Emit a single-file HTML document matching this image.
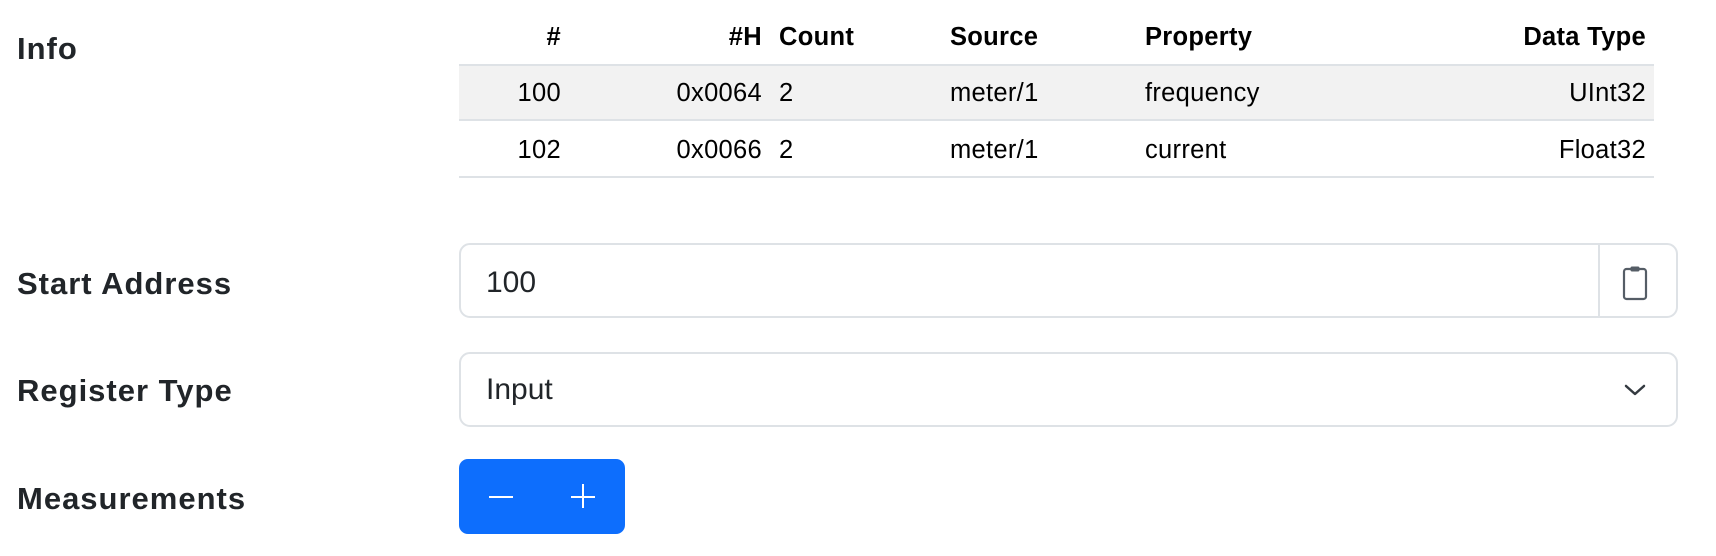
<!DOCTYPE html>
<html><head><meta charset="utf-8"><style>
*{box-sizing:border-box;margin:0;padding:0}
body{width:1716px;height:556px;background:#fff;font-family:"Liberation Sans",Arial,sans-serif;color:#212529;position:relative;overflow:hidden}
.lbl{position:absolute;left:17px;font-weight:bold;font-size:31px;letter-spacing:1px;color:#212529;line-height:1}
.t{position:absolute;font-size:25.5px;line-height:1;color:#000;letter-spacing:0.3px}
.h{font-weight:bold}
.r{text-align:right}
.row{position:absolute;left:459px;width:1195px}
.box{position:absolute;left:459px;width:1219px;height:75px;border:2px solid #dee2e6;border-radius:11px}
</style></head><body>
<div class="lbl" style="top:33px">Info</div>
<div class="lbl" style="top:268px">Start Address</div>
<div class="lbl" style="top:375px">Register Type</div>
<div class="lbl" style="top:483px">Measurements</div>

<div class="row" style="top:64px;height:57px;background:#f2f2f2;border-top:2px solid #dee2e6;border-bottom:2px solid #dee2e6"></div>
<div class="row" style="top:176px;height:2px;background:#dee2e6"></div>

<!-- header -->
<div class="t h r" style="top:25px;left:461px;width:100px">#</div>
<div class="t h r" style="top:25px;left:662px;width:100px">#H</div>
<div class="t h" style="top:25px;left:779px">Count</div>
<div class="t h" style="top:25px;left:950px">Source</div>
<div class="t h" style="top:25px;left:1145px">Property</div>
<div class="t h r" style="top:25px;left:1446px;width:200px">Data Type</div>
<!-- row1 -->
<div class="t r" style="top:81px;left:461px;width:100px">100</div>
<div class="t r" style="top:81px;left:662px;width:100px">0x0064</div>
<div class="t" style="top:81px;left:779px">2</div>
<div class="t" style="top:81px;left:950px">meter/1</div>
<div class="t" style="top:81px;left:1145px">frequency</div>
<div class="t r" style="top:81px;left:1446px;width:200px">UInt32</div>
<!-- row2 -->
<div class="t r" style="top:138px;left:461px;width:100px">102</div>
<div class="t r" style="top:138px;left:662px;width:100px">0x0066</div>
<div class="t" style="top:138px;left:779px">2</div>
<div class="t" style="top:138px;left:950px">meter/1</div>
<div class="t" style="top:138px;left:1145px">current</div>
<div class="t r" style="top:138px;left:1446px;width:200px">Float32</div>

<div class="box" style="top:243px">
  <div style="position:absolute;left:25px;top:20px;font-size:30px;line-height:1.2;color:#212529">100</div>
  <div style="position:absolute;left:1137px;top:0;width:2px;height:71px;background:#dee2e6"></div>
  <svg style="position:absolute;left:1160px;top:20px" width="28" height="36" viewBox="0 0 28 36"><rect x="3" y="4" width="22" height="30" rx="2.5" fill="none" stroke="#555d66" stroke-width="2.2"/><rect x="9.5" y="1.5" width="9" height="5" rx="1.5" fill="#555d66"/></svg>
</div>
<div class="box" style="top:352px">
  <div style="position:absolute;left:25px;top:18px;font-size:30px;line-height:1.2;color:#212529">Input</div>
  <svg style="position:absolute;left:1162px;top:28px" width="24" height="16" viewBox="0 0 24 16"><path d="M3 4 L12 12 L21 4" fill="none" stroke="#343a40" stroke-width="2.5" stroke-linecap="round" stroke-linejoin="round"/></svg>
</div>

<div style="position:absolute;left:459px;top:459px;width:166px;height:75px;background:#0d6efd;border-radius:9px">
  <div style="position:absolute;left:30px;top:37px;width:24px;height:2px;background:#fff"></div>
  <div style="position:absolute;left:112px;top:37px;width:24px;height:2px;background:#fff"></div>
  <div style="position:absolute;left:123px;top:25px;width:2px;height:24px;background:#fff"></div>
</div>
</body></html>
